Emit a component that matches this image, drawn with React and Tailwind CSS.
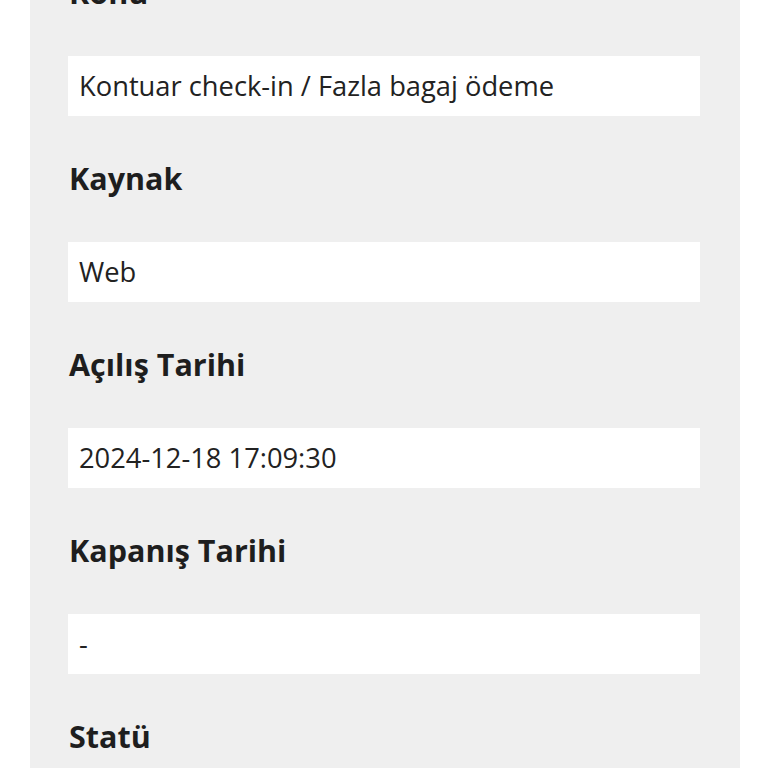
const fields = [
  { label: 'Konu', value: 'Kontuar check-in / Fazla bagaj ödeme' },
  { label: 'Kaynak', value: 'Web' },
  { label: 'Açılış Tarihi', value: '2024-12-18 17:09:30' },
  { label: 'Kapanış Tarihi', value: '-' },
  { label: 'Statü', value: '' },
];

export default function App() {
  return (
    <div className="h-[768px] overflow-hidden bg-white font-['Open_Sans',sans-serif] text-[#222]">
      <div className="ml-[30px] -mt-[70px] w-[710px] bg-[#efefef] pb-[40px] pl-[38px] pr-[40px]">
        {fields.map((f, i) => (
          <div key={i} className="pt-[39px]">
            <div className="h-[46px] pl-[1px] text-[30.5px] font-bold leading-[46px] text-[#1e1e1e]">{f.label}</div>
            <div className="mt-[41px] flex h-[60px] items-center bg-white px-[11px] text-[27.3px]">
              {f.value}
            </div>
          </div>
        ))}
      </div>
    </div>
  );
}
